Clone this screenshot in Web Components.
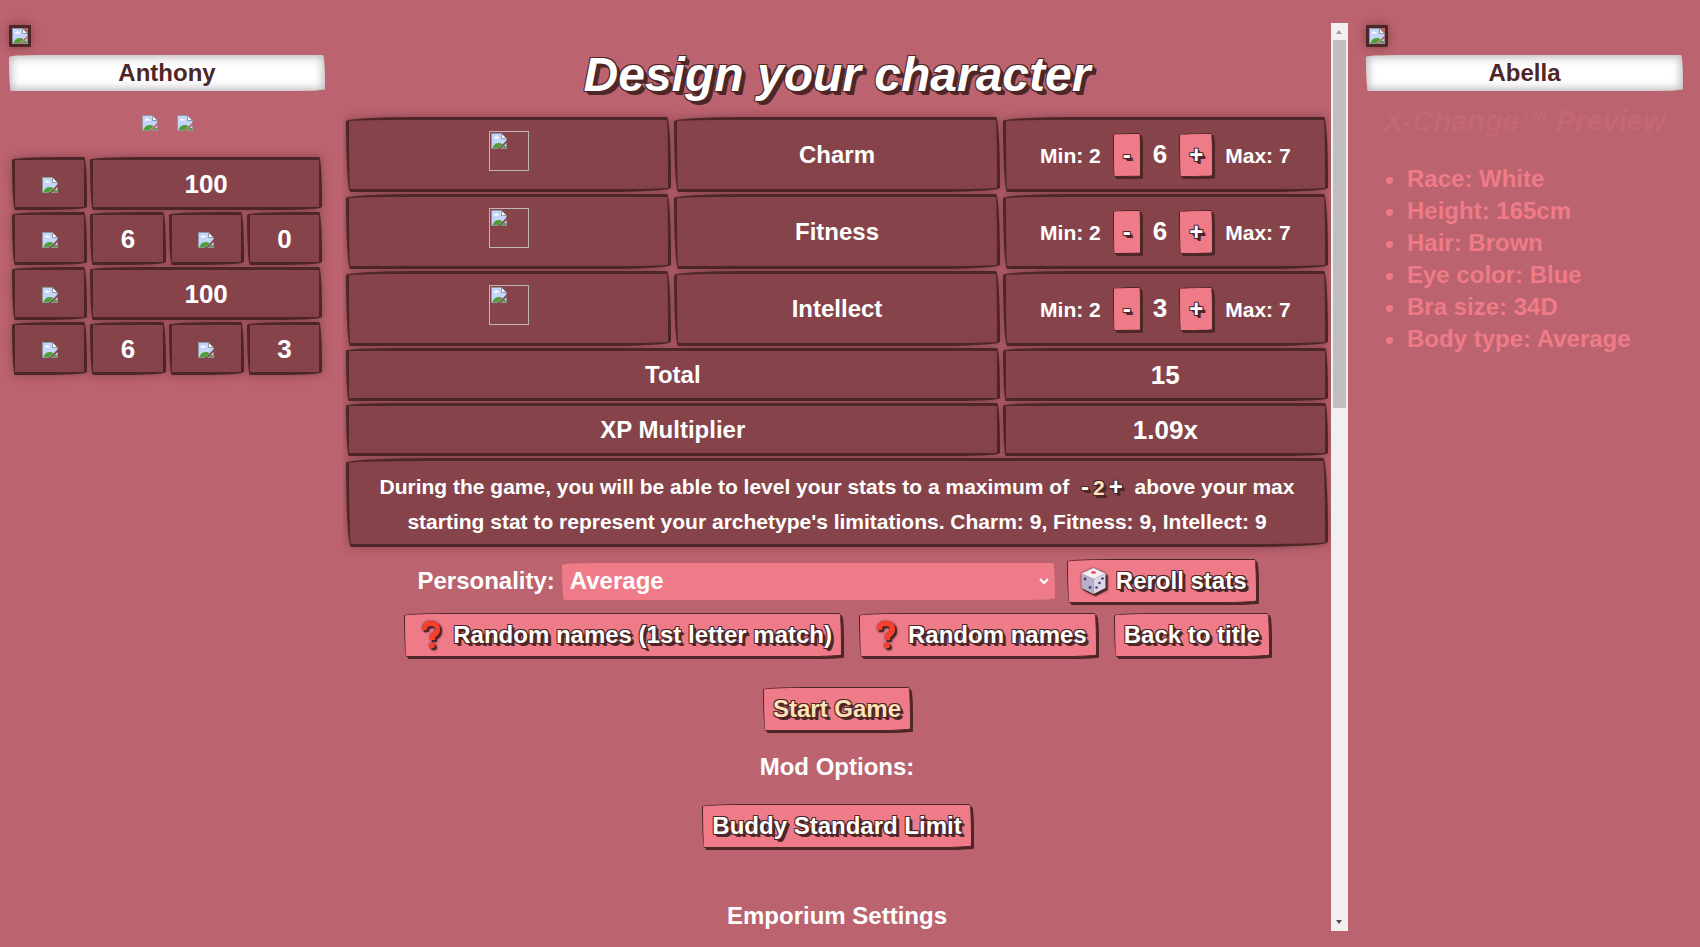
<!DOCTYPE html>
<html lang="en">
<head>
<meta charset="utf-8">
<title>Design your character</title>
<style>
html { height: 100%; }
body { margin: 0; min-height: 100%; background: #bb636e; color: #fff; font: bold 24px/32px "Liberation Sans", Arial, sans-serif; --dark: #4e2627; --cell: #86444a; --pink: #ee7b87; --cream: #ffe2b8; --wobble: 255px 15px 225px 15px / 15px 225px 15px 255px; --outline: -1px -1px 0 #4e2627, 1px -1px 0 #4e2627, -1px 1px 0 #4e2627, 1px 1px 0 #4e2627, 2px 2px 0 #4e2627, 3px 3px 0 #4e2627; }
</style>
</head>
<body>
<game-app></game-app>
<script>
const define = (name, html, setup) => {
  const template = document.createElement('template');
  template.innerHTML = html;
  customElements.define(name, class extends HTMLElement {
    connectedCallback() {
      if (this.shadowRoot) return;
      const root = this.attachShadow({ mode: 'open' });
      root.append(template.content.cloneNode(true));
      if (setup) setup(root, this);
    }
  });
};

define('missing-image', `
<style>
:host { display: inline-block; width: 16px; height: 16px; line-height: 0; }
:host([framed]) { border: 3px solid var(--dark); border-radius: 1px; box-shadow: 0 0 8px rgba(78,38,39,.5); }
:host([boxed]) { border: 1px solid #c0b4b6; width: 38px; height: 38px; }
:host([boxed]) svg { margin: 1px; }
svg { display: block; }
</style>
<svg width="16" height="16" viewBox="0 0 16 16" aria-hidden="true">
<path d="M1 1h10v5h4v2L8 15H1z" fill="#c3d5fa"/>
<path d="M2.500 5.500q0-1.500 1.500-1.300q1-1.700 2.500 0q1.500-.2 1.500 1.300z" fill="#fff"/>
<path d="M1.500 15q1.500-5 6.500-5q2 0 3.500 1.200L7.500 15z" fill="#4f9f34"/>
<path d="M.5 0v15.500H7M0 .5h11M15.500 5v2.500" fill="none" stroke="#8f979d"/>
<path d="M10.500.5v5h5z" fill="#fff" stroke="#8f979d"/>
<path d="M15.500 10v5.500H10l2-2z" fill="#c3d5fa"/><path d="M10.500 15l3-2.500 1.500 1v1.500z" fill="#4f9f34"/>
<path d="M15.500 10.500v5H9.500" fill="none" stroke="#8f979d"/>
</svg>`);

define('name-box', `
<style>
:host { display: block; }
input { display: block; box-sizing: border-box; width: 100%; height: 36px; margin: 0; padding: 0 8px; border: 0; border-radius: var(--wobble); background: #fff; box-shadow: inset 0 0 10px 2px rgba(78,66,72,.4); color: var(--dark); font: inherit; text-align: center; }
</style>
<input type="text">`, (root, host) => {
  const input = root.querySelector('input');
  input.value = host.getAttribute('value');
  input.setAttribute('aria-label', host.getAttribute('label'));
});

define('ink-button', `
<style>
:host { display: inline-block; }
button { display: flex; align-items: center; gap: 6px; box-sizing: border-box; height: 44px; margin: 0; padding: 0 9px; border: 1px solid var(--dark); border-radius: var(--wobble); background: var(--pink); box-shadow: 3px 3px 0 -1px var(--dark), 2px 2px 0 0 var(--dark); color: inherit; font: inherit; text-shadow: var(--outline); white-space: nowrap; }
:host([primary]) button { color: var(--cream); }
::slotted(svg) { width: 33px; height: 28px; filter: drop-shadow(0 0 1px #4e2627) drop-shadow(2px 2px 0 #4e2627); }
</style>
<button type="button"><slot name="icon"></slot><slot></slot></button>`);

define('vitals-table', `
<style>
:host { display: block; }
table { width: 100%; table-layout: fixed; border-collapse: separate; border-spacing: 3px 2px; font-size: 26px; }
td { box-sizing: border-box; height: 53px; padding: 0; border: 3px solid var(--dark); border-radius: var(--wobble); background: var(--cell); box-shadow: 0 0 8px rgba(78,38,39,.5); text-align: center; }
</style>
<table>
<tr><td><missing-image></missing-image></td><td colspan="3">100</td></tr>
<tr><td><missing-image></missing-image></td><td>6</td><td><missing-image></missing-image></td><td>0</td></tr>
<tr><td><missing-image></missing-image></td><td colspan="3">100</td></tr>
<tr><td><missing-image></missing-image></td><td>6</td><td><missing-image></missing-image></td><td>3</td></tr>
</table>`);

define('stat-stepper', `
<style>
:host { display: flex; justify-content: center; align-items: baseline; gap: 12px; font-size: 21px; }
b { font-size: 26px; }
ink-button { font-size: 24px; }
</style>
<span>Min: 2</span><ink-button>-</ink-button><b></b><ink-button>+</ink-button><span>Max: 7</span>`, (root, host) => {
  root.querySelector('b').textContent = host.getAttribute('value');
});

define('stats-table', `
<style>
:host { display: block; }
table { width: 100%; table-layout: fixed; border-collapse: separate; border-spacing: 3px 2px; }
td, th { box-sizing: border-box; height: 53px; padding: 0; border: 3px solid var(--dark); border-radius: var(--wobble); background: var(--cell); box-shadow: 0 0 8px rgba(78,38,39,.5); text-align: center; }
.stat > * { height: 75px; }
.big { font-size: 26px; }
.note { height: 89px; padding: 2px 24px 0; font-size: 21px; line-height: 35px; }
.limit { display: inline-flex; align-items: baseline; gap: 4px; height: 35px; margin: 0 6px; vertical-align: bottom; }
.limit button { margin: 0; padding: 0; border: 0; background: none; color: inherit; font: inherit; font-size: 24px; text-shadow: var(--outline); }
.limit span { color: var(--cream); text-shadow: var(--outline); }
</style>
<table>
<tr class="stat"><td><missing-image boxed></missing-image></td><th>Charm</th><td><stat-stepper value="6"></stat-stepper></td></tr>
<tr class="stat"><td><missing-image boxed></missing-image></td><th>Fitness</th><td><stat-stepper value="6"></stat-stepper></td></tr>
<tr class="stat"><td><missing-image boxed></missing-image></td><th>Intellect</th><td><stat-stepper value="3"></stat-stepper></td></tr>
<tr><th colspan="2">Total</th><td class="big">15</td></tr>
<tr><th colspan="2">XP Multiplier</th><td class="big">1.09x</td></tr>
<tr><td class="note" colspan="3"><span>During the game, you will be able to level your stats to a maximum of</span> <span class="limit"><button type="button">-</button><span>2</span><button type="button">+</button></span> <span>above your max</span> <span>starting stat to represent your archetype's limitations. Charm: 9, Fitness: 9, Intellect: 9</span></td></tr>
</table>`);

define('personality-picker', `
<style>
:host { display: flex; align-items: center; gap: 7px; }
.box { display: grid; align-items: center; }
select { grid-area: 1 / 1; width: 29vw; height: 37px; margin: 0; padding: 0 8px; border: 0; border-radius: var(--wobble); background: var(--pink); color: inherit; font: inherit; appearance: none; }
svg { grid-area: 1 / 1; justify-self: end; margin-right: 6px; pointer-events: none; }
</style>
<label for="personality">Personality:</label>
<div class="box"><select id="personality"><option>Average</option></select>
<svg width="10" height="10" viewBox="0 0 10 10" fill="none" stroke="#fff" stroke-width="2"><path d="M1 3l4 4 4-4"/></svg></div>`);

define('scroll-track', `
<style>
:host { display: flex; flex-direction: column; align-items: center; width: 17px; background: #f1eff2; }
svg { flex: none; display: block; }
i { flex: none; width: 13px; height: 40.5%; background: #c1bec1; }
.rest { flex: 1; }
</style>
<svg width="17" height="17" viewBox="0 0 17 17"><path d="M5 11h6L8 7z" fill="#a09da0"/></svg>
<i></i><div class="rest"></div>
<svg width="17" height="17" viewBox="0 0 17 17"><path d="M5 6h6l-3 4z" fill="#504c50"/></svg>`);

const question = `<svg slot="icon" viewBox="0 0 33 28" aria-hidden="true"><path d="M10.500 9Q10 2.500 16.500 2.500Q24 2.500 23.500 9Q23 12.500 18.500 15V19" fill="none" stroke="#fb3f2c" stroke-width="5" stroke-linejoin="round"/><circle cx="18" cy="24.500" r="2.800" fill="#fb3f2c"/></svg>`;
const dice = `<svg slot="icon" viewBox="0 0 33 28" aria-hidden="true"><path d="M16.500 1l12 5.500-12 5.500-12-5.500z" fill="#f3edf6"/><path d="M4.500 6.500l12 5.500v15l-12-6z" fill="#b9b1c9"/><path d="M28.500 6.500l-12 5.500v15l12-6z" fill="#ddd5e8"/><ellipse cx="16.500" cy="5.500" rx="2.500" ry="1.300" fill="#fb3f2c"/><g fill="#463b72"><circle cx="8" cy="12" r="1.400"/><circle cx="13" cy="20.500" r="1.400"/><circle cx="25.500" cy="11.500" r="1.300"/><circle cx="22.500" cy="16" r="1.300"/><circle cx="19.500" cy="20.500" r="1.300"/></g></svg>`;

define('character-form', `
<style>
:host { display: flex; flex-direction: column; align-items: center; box-sizing: border-box; height: 100%; overflow: auto; scrollbar-width: none; padding-top: 24px; text-align: center; }
:host > *, .row { flex: none; }
h1 { margin: 0 0 12px; font: italic bold 48px/56px "Liberation Sans", Arial, sans-serif; text-shadow: var(--outline), 4px 4px 0 #4e2627; }
stats-table { width: 100%; }
.row { display: flex; gap: 10px 17px; margin-top: 10px; }
.first { gap: 12px; }
.start { margin-top: 30px; }
p { margin: 20px 0 21px; }
h2 { margin: 52px 0 32px; font: inherit; }
</style>
<h1>Design your character</h1>
<stats-table></stats-table>
<div class="row first"><personality-picker></personality-picker><ink-button>${dice}Reroll stats</ink-button></div>
<div class="row"><ink-button>${question}Random names (1st letter match)</ink-button><ink-button>${question}Random names</ink-button><ink-button>Back to title</ink-button></div>
<ink-button class="start" primary>Start Game</ink-button>
<p>Mod Options:</p>
<ink-button>Buddy Standard Limit</ink-button>
<h2>Emporium Settings</h2>`);

define('player-panel', `
<style>
:host { display: flex; flex-direction: column; }
missing-image[framed] { align-self: flex-start; margin-bottom: 8px; }
.badges { display: flex; justify-content: center; gap: 19px; padding: 24px 0; }
</style>
<missing-image framed></missing-image>
<name-box value="Anthony" label="First name"></name-box>
<div class="badges"><missing-image></missing-image><missing-image></missing-image></div>
<vitals-table></vitals-table>`);

define('preview-panel', `
<style>
:host { display: flex; flex-direction: column; color: var(--pink); }
missing-image { align-self: flex-start; margin-bottom: 8px; }
h2 { margin: 12px 0 24px; font: italic bold 29px/36px "Liberation Sans", Arial, sans-serif; color: #c36874; text-align: center; }
ul { margin: 0; padding-left: 41px; }
</style>
<missing-image framed></missing-image>
<name-box value="Abella" label="X-Change name"></name-box>
<h2>X-Change™ Preview</h2>
<ul><li>Race: White</li><li>Height: 165cm</li><li>Hair: Brown</li><li>Eye color: Blue</li><li>Bra size: 34D</li><li>Body type: Average</li></ul>`);

define('game-app', `
<style>
:host { display: grid; grid-template-columns: minmax(0, 316px) minmax(0, 1fr) 17px minmax(0, 335px); box-sizing: border-box; height: 100vh; padding: 23px 17px 16px 9px; }
player-panel, preview-panel { padding-top: 2px; }
character-form { margin-left: 18px; }
preview-panel { margin-left: 18px; }
</style>
<player-panel></player-panel>
<character-form></character-form>
<scroll-track></scroll-track>
<preview-panel></preview-panel>`);
</script>
</body>
</html>
